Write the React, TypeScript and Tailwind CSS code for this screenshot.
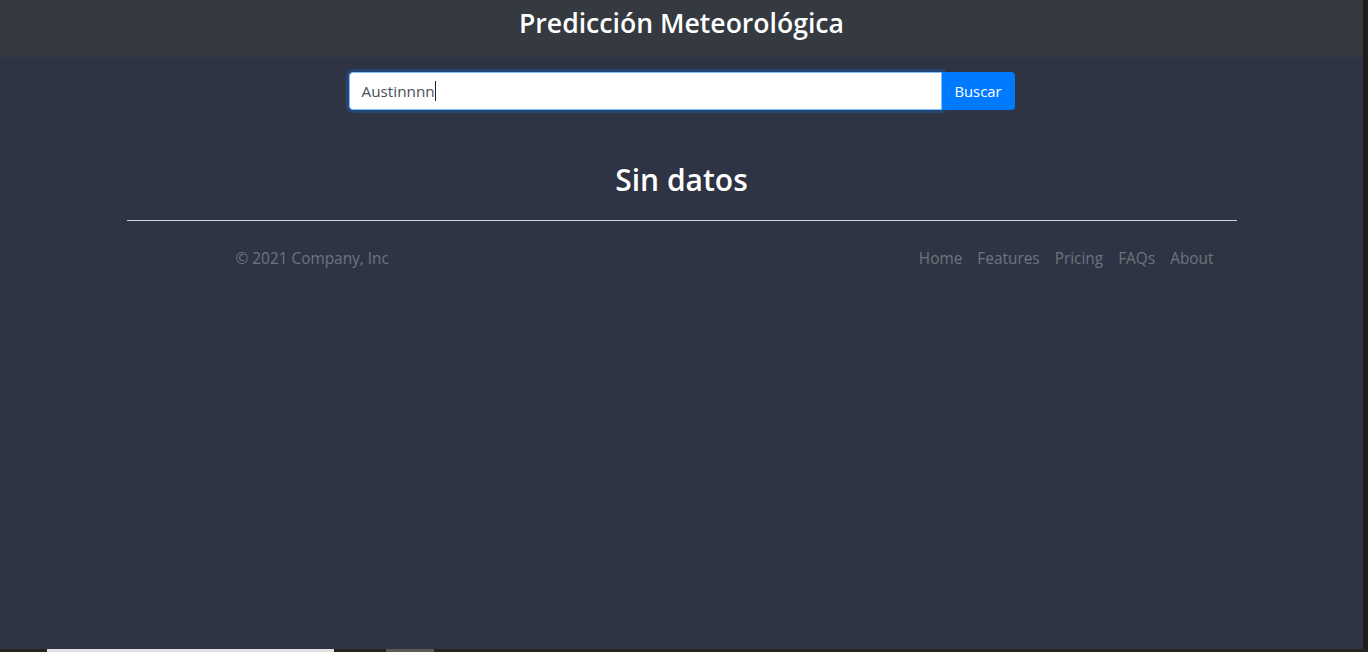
export default function App() {
  const links = ["Home", "Features", "Pricing", "FAQs", "About"];
  return (
    <div className="flex h-[652px] w-full flex-col overflow-hidden bg-[#1e1e1e] font-['Open_Sans',sans-serif]">
      <div className="flex min-h-0 flex-1">
        <div className="flex w-[1363px] flex-col bg-[#2f3445]">
          <header className="flex h-[57px] justify-center bg-[#343a40] pt-[8px]">
            <h3 className="text-[26.6px] font-semibold leading-[1.2] text-white">Predicción Meteorológica</h3>
          </header>

          <div className="mt-[15px] flex justify-center">
            <div className="flex w-[666px]">
              <div className="flex h-[38px] flex-1 items-center rounded-l-[4px] border border-[#80bdff] bg-white px-3 shadow-[0_0_0_3px_rgba(0,123,255,0.25)]">
                <span className="text-[15.3px] text-[#495057]">Austinnnn</span>
                <span className="h-[20px] w-px bg-[#222]" />
              </div>
              <button className="h-[38px] w-[73px] rounded-r-[4px] bg-[#007bff] text-[14.8px] text-white">Buscar</button>
            </div>
          </div>

          <h2 className="mt-[52px] text-center text-[30px] font-semibold leading-[1.2] text-white">Sin datos</h2>

          <div className="mx-auto mt-[22px] w-[1110px]">
            <hr className="border-t border-[#d0d0d0]" />
            <footer className="flex items-center justify-between py-[26px] pl-[109px] pr-[23px] text-[15.4px] leading-6 text-[#6c757d]">
              <p>© 2021 Company, Inc</p>
              <nav className="flex gap-[15px]">
                {links.map((l) => (
                  <a key={l} href="#" className="text-[#6c757d]">
                    {l}
                  </a>
                ))}
              </nav>
            </footer>
          </div>
        </div>
        <div className="flex-1 bg-[#1e1e1e]" />
      </div>
      <div className="flex h-[3px] bg-[#23231f]">
        <div className="ml-[47px] w-[287px] bg-[#e0e0e0]" />
        <div className="ml-[52px] w-[48px] bg-[#5c5c54]" />
      </div>
    </div>
  );
}
